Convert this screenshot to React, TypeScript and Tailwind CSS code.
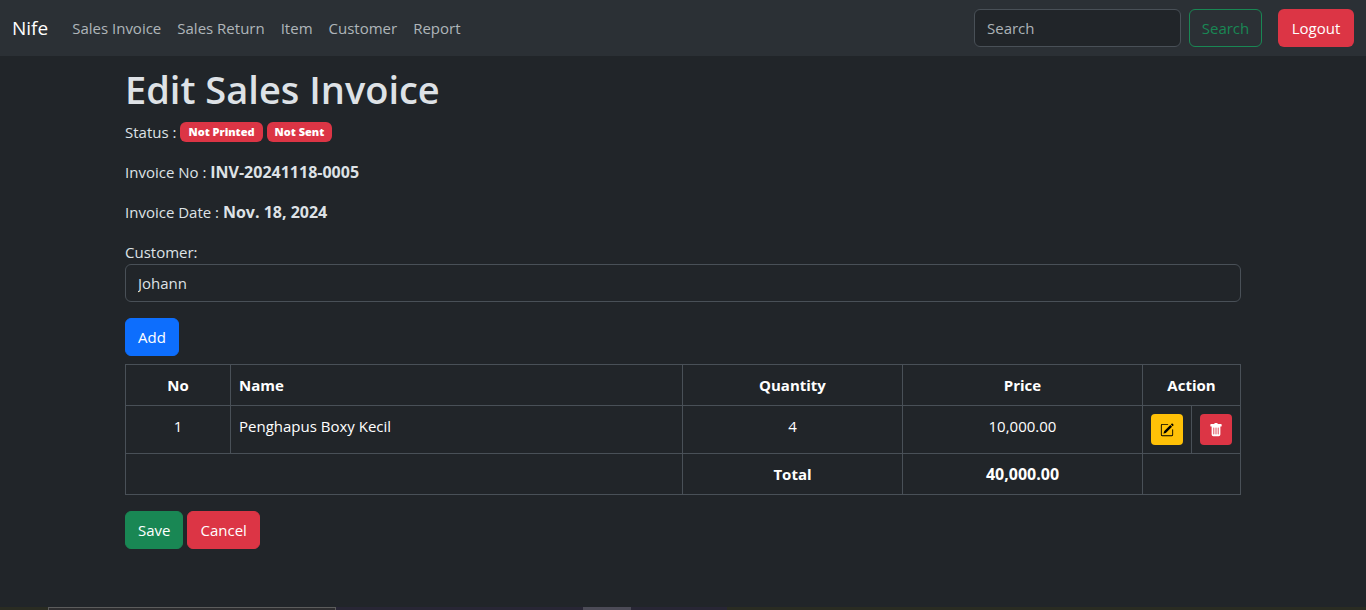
import { BsPencilSquare, BsTrashFill } from "react-icons/bs";

const links = ["Sales Invoice", "Sales Return", "Item", "Customer", "Report"];
const btn = "h-[38px] rounded-md border px-3 text-white";
const badge = "rounded-md bg-[#dc3545] px-2 text-[11px] leading-5 font-extrabold text-white";
const cell = "border border-[#495057] px-2";

export default function App() {
  return (
    <div className="flex min-h-screen flex-col bg-[#212529] font-['Open_Sans','Noto_Sans',sans-serif] text-[15px] leading-6 text-[#dee2e6]">
      <nav className="flex h-14 items-center bg-[#2b3035] px-3">
        <a href="#" className="mr-4 text-[19px] text-white">Nife</a>
        <ul className="flex flex-1">
          {links.map((l) => (
            <li key={l}>
              <a href="#" className="block px-2 text-[#dee2e6]/75">{l}</a>
            </li>
          ))}
        </ul>
        <form className="flex gap-2" onSubmit={(e) => e.preventDefault()}>
          <input
            type="search"
            aria-label="Search"
            placeholder="Search"
            className="h-[38px] w-[207px] rounded-md border border-[#495057] bg-[#212529] px-3 placeholder:text-[#dee2e6]/75"
          />
          <button className="h-[38px] w-[73px] rounded-md border border-[#198754] text-[#198754]">Search</button>
        </form>
        <button className="ml-4 h-[38px] w-[76px] rounded-md bg-[#dc3545] text-white">Logout</button>
      </nav>

      <main className="mx-auto w-full max-w-[1140px] flex-1 px-3 pt-[10px]">
        <h1 className="mb-2 text-[38px] leading-[46px] font-semibold">Edit Sales Invoice</h1>
        <div className="mb-4 flex items-center gap-1">
          <span>Status :</span>
          <span className={badge}>Not Printed</span>
          <span className={badge}>Not Sent</span>
        </div>
        <p className="mb-4">Invoice No : <b className="text-base">INV-20241118-0005</b></p>
        <p className="mb-4">Invoice Date : <b className="text-base">Nov. 18, 2024</b></p>
        <label htmlFor="customer" className="block">Customer:</label>
        <select
          id="customer"
          className="mb-4 block h-[38px] w-full appearance-none rounded-md border border-[#495057] bg-[#212529] px-3"
        >
          <option>Johann</option>
        </select>
        <button className={`${btn} mb-2 block border-[#0d6efd] bg-[#0d6efd]`}>Add</button>

        <table className="mb-4 w-full table-fixed border-collapse text-center text-white">
          <colgroup>
            <col className="w-[105px]" />
            <col />
            <col className="w-[220px]" />
            <col className="w-[240px]" />
            <col className="w-[49px]" />
            <col className="w-[49px]" />
          </colgroup>
          <thead>
            <tr className="h-[41px]">
              <th className={cell}>No</th>
              <th className={`${cell} text-left`}>Name</th>
              <th className={cell}>Quantity</th>
              <th className={cell}>Price</th>
              <th className={cell} colSpan={2}>Action</th>
            </tr>
          </thead>
          <tbody>
            <tr className="h-12 align-top">
              <td className={`${cell} pt-2`}>1</td>
              <td className={`${cell} pt-2 text-left`}>Penghapus Boxy Kecil</td>
              <td className={`${cell} pt-2`}>4</td>
              <td className={`${cell} pt-2`}>10,000.00</td>
              <td className={`${cell} pt-2`}>
                <button aria-label="Edit" className="flex h-[31px] w-8 items-center justify-center rounded bg-[#ffc107] text-black">
                  <BsPencilSquare size={14} />
                </button>
              </td>
              <td className={`${cell} pt-2`}>
                <button aria-label="Delete" className="flex h-[31px] w-8 items-center justify-center rounded bg-[#dc3545]">
                  <BsTrashFill size={14} />
                </button>
              </td>
            </tr>
            <tr className="h-[41px]">
              <td className={cell} colSpan={2}></td>
              <th className={cell}>Total</th>
              <th className={`${cell} text-base`}>40,000.00</th>
              <td className={cell} colSpan={2}></td>
            </tr>
          </tbody>
        </table>

        <div className="flex gap-1">
          <button className={`${btn} border-[#198754] bg-[#198754]`}>Save</button>
          <button className={`${btn} border-[#dc3545] bg-[#dc3545]`}>Cancel</button>
        </div>
      </main>

      <footer className="flex h-[3px] bg-[#2a2c22]">
        <div className="w-12" />
        <div className="w-72 border border-b-0 border-[#5c5c5c] bg-[#2e2e30]" />
        <div className="w-[247px] bg-[#282635]" />
        <div className="w-12 bg-[#4c4b57]" />
        <div className="w-24 bg-[#282635]" />
      </footer>
    </div>
  );
}
